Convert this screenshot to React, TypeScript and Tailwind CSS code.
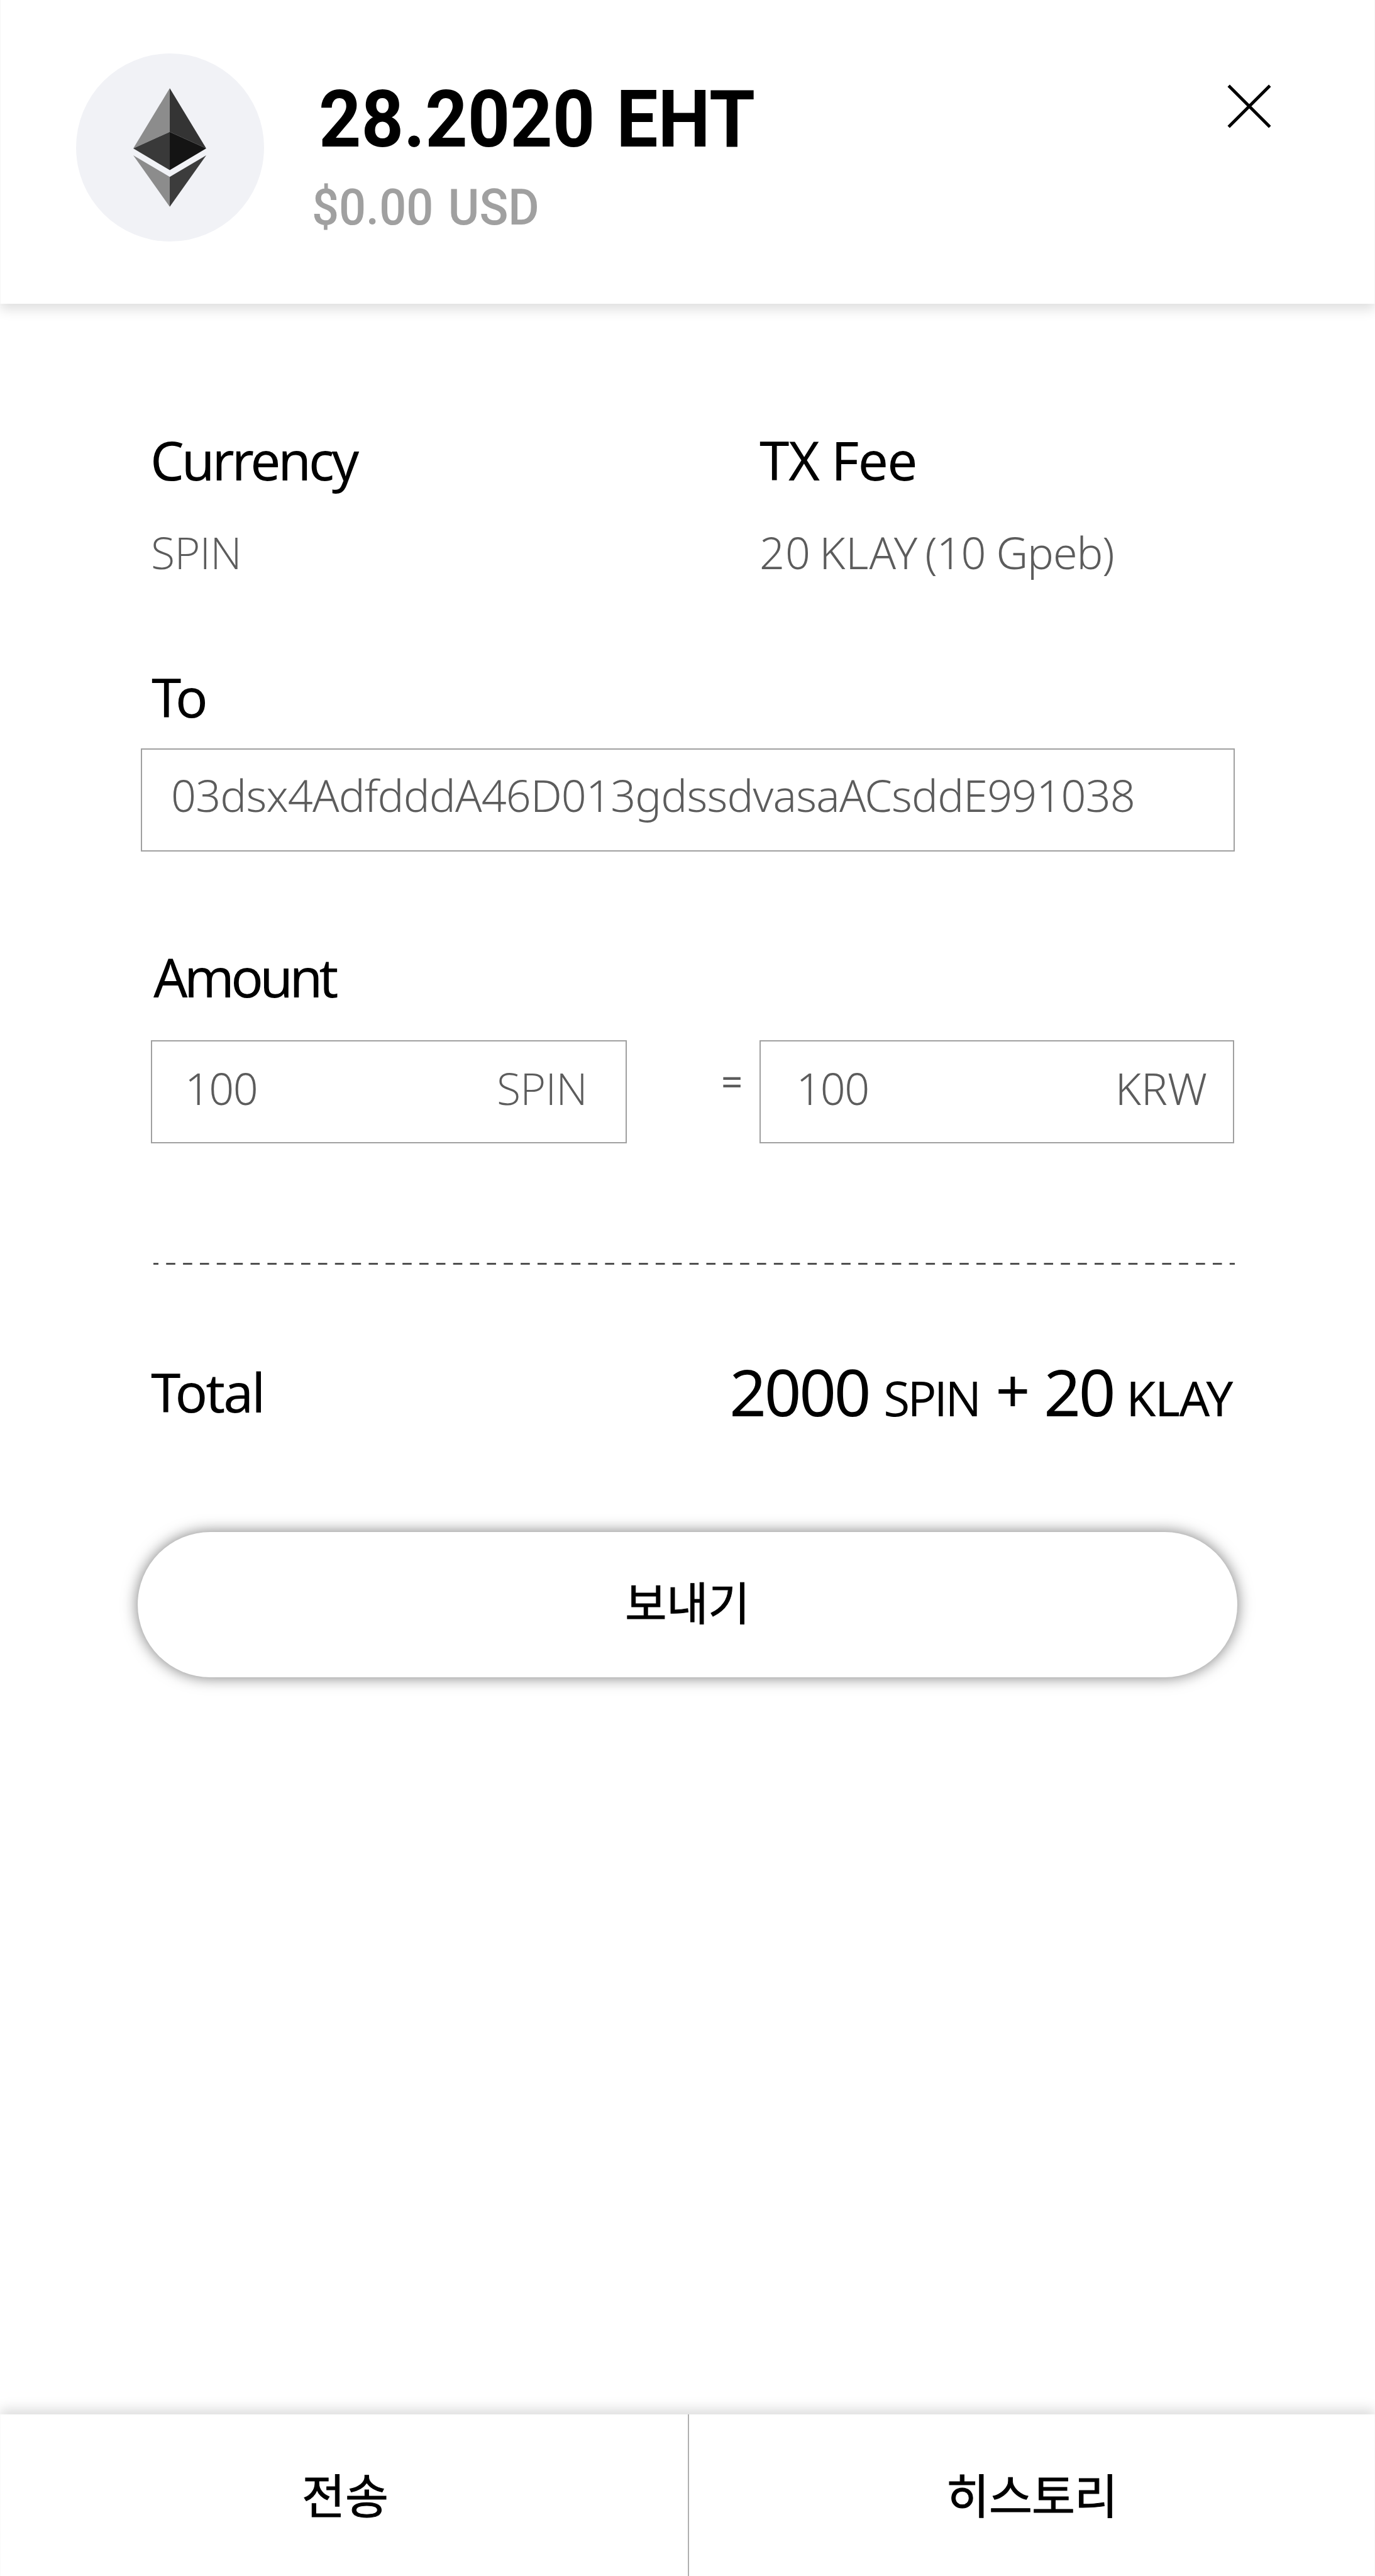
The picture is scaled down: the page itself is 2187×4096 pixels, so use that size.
import type { ReactNode } from "react";

function EthereumMark() {
  return (
    <svg className="h-[189px] w-[116px]" viewBox="63 116 594 966" aria-hidden="true">
      <path fill="#8c8c8c" d="M360 116 63 607l297-135z" />
      <path fill="#343434" d="M360 116v356l297 135z" />
      <path fill="#393939" d="M360 472 63 607l297 176z" />
      <path fill="#141414" d="M360 472v311l297-176z" />
      <path fill="#8c8c8c" d="M63 663l297 175v244z" />
      <path fill="#3c3c3c" d="M657 663 360 838v244z" />
    </svg>
  );
}

function CloseIcon() {
  return (
    <svg className="size-[70px]" viewBox="0 0 70 70" fill="none" stroke="#000" strokeWidth="4.9" aria-hidden="true">
      <path d="M2.2 2.2 67.8 67.8M67.8 2.2 2.2 67.8" />
    </svg>
  );
}

function Label({ className, children }: { className: string; children: ReactNode }) {
  return <span className={`text-[85.4px] leading-[100px] text-black ${className}`}>{children}</span>;
}

function Header() {
  return (
    <header className="relative z-10 flex h-[483px] items-start border-x border-[#f7f7f7] bg-white pl-[119.5px] pr-[164px] shadow-[0_9px_18px_rgba(0,0,0,0.13)]">
      <div className="mt-[85px] flex size-[299px] items-center justify-center rounded-full bg-[#f1f2f6]">
        <EthereumMark />
      </div>
      <div className="ml-[76px] mt-[121px] flex flex-col font-['Roboto',sans-serif]">
        <h1 className="ml-[11px] origin-left scale-x-[0.938] text-[125.5px] font-bold leading-[140px] text-black [word-spacing:5px]">28.2020 EHT</h1>
        <p className="mt-[19px] origin-left scale-x-[0.947] text-[80px] font-medium leading-[100px] text-[#a0a0a0] [word-spacing:5px]">$0.00 USD</p>
      </div>
      <button type="button" aria-label="Close" className="ml-auto mt-[134px]">
        <CloseIcon />
      </button>
    </header>
  );
}

function Details() {
  return (
    <section className="pl-[239px] pt-[198px]">
      <div className="grid grid-cols-[969px_auto]">
        <Label className="tracking-[-4.1px]">Currency</Label>
        <Label className="tracking-[-1.6px] [word-spacing:-1px]">TX Fee</Label>
      </div>
      <div className="mt-[47px] grid grid-cols-[969px_auto] text-[70px] font-[330] leading-[100px] text-[#5c5c5c]">
        <span className="ml-px font-['Open_Sans',sans-serif] tracking-[-0.8px]">SPIN</span>
        <span>
          <span className="tracking-[1px] [word-spacing:-6px]">20 KLAY</span>
          <span className="ml-[11px] tracking-[-1.1px]">(10 Gpeb)</span>
        </span>
      </div>
    </section>
  );
}

function Recipient() {
  return (
    <section className="mt-[130px] flex flex-col pl-[224px] pr-[223px]">
      <Label className="ml-[17px] tracking-[-3.5px]">To</Label>
      <div className="mt-[32px] h-[164px] border-2 border-[#a0a0a0] pl-[46px] pt-[22px] text-[70px] font-[330] leading-[100px] tracking-[-0.83px] text-[#5c5c5c]">
        03dsx4AdfdddA46D013gdssdvasaACsddE991038
      </div>
    </section>
  );
}

function Amount() {
  return (
    <section className="mt-[149px] flex flex-col pl-[240px] pr-[224px]">
      <Label className="ml-[4px] tracking-[-5.6px]">Amount</Label>
      <div className="mt-[51px] flex text-[70px] font-[330] leading-[100px] text-[#5c5c5c]">
        <div className="flex h-[164px] w-[757px] justify-between border-2 border-[#a0a0a0] pl-[52px] pr-[61px] pt-[24px]">
          <span className="tracking-[-1.6px]">100</span>
          <span className="font-['Open_Sans',sans-serif] tracking-[-0.8px]">SPIN</span>
        </div>
        <span className="ml-[150px] mt-[15px] text-[60px] font-normal">=</span>
        <div className="ml-auto flex h-[164px] w-[755px] justify-between border-2 border-[#a0a0a0] pl-[56.5px] pr-[41px] pt-[24px]">
          <span className="tracking-[-1.6px]">100</span>
          <span>KRW</span>
        </div>
      </div>
    </section>
  );
}

function Total() {
  return (
    <section className="mt-[190px] px-[223px]">
      <svg className="ml-[20.5px] block h-[3px] w-[1720px]" viewBox="0 0 1720 3" aria-hidden="true">
        <path d="M0 1.5h1720" stroke="#505050" strokeWidth="2.8" strokeDasharray="14.6 12.25" strokeDashoffset="6.6" />
      </svg>
      <div className="mt-[152px] flex h-[100px] pl-[17px] text-black">
        <Label className="tracking-[-2.9px]">Total</Label>
        <div className="-mt-px ml-auto mr-[4px] flex items-baseline text-[102.8px] leading-[100px]">
          <span className="tracking-[-3.3px]">2000</span>
          <span className="ml-[23px] font-['Open_Sans',sans-serif] text-[76.5px] tracking-[-3.7px]">SPIN</span>
          <span className="ml-[26px] -translate-y-[5px] text-[96px]">+</span>
          <span className="ml-[22px] tracking-[-3.3px]">20</span>
          <span className="ml-[20px] text-[76.5px] tracking-[-1.6px]">KLAY</span>
        </div>
      </div>
    </section>
  );
}

function TabBar() {
  return (
    <nav className="mt-auto grid h-[257px] grid-cols-[1095px_1090px] border-x border-[#fafafa] bg-white font-['Noto_Sans_CJK_KR',sans-serif] text-[75px] leading-[100px] text-black shadow-[0_-9px_18px_rgba(0,0,0,0.13)] [-webkit-text-stroke:1px_black]">
      <button type="button" className="flex justify-center border-r-2 border-[#b0b0b0] pl-[3px] pt-[76px]">
        전송
      </button>
      <button type="button" className="flex justify-center pt-[76px] tracking-[-0.9px]">
        히스토리
      </button>
    </nav>
  );
}

export default function App() {
  return (
    <main className="flex h-[4096px] w-[2187px] flex-col overflow-hidden whitespace-nowrap bg-white font-['Noto_Sans',sans-serif]">
      <Header />
      <Details />
      <Recipient />
      <Amount />
      <Total />
      <button
        type="button"
        className="ml-[219px] mt-[173px] flex h-[231px] w-[1749px] justify-center rounded-full bg-white pt-[59px] font-['Noto_Sans_CJK_KR',sans-serif] text-[72px] leading-[100px] text-black shadow-[0_0_25px_rgba(0,0,0,0.53)] [-webkit-text-stroke:1px_black]"
      >
        보내기
      </button>
      <TabBar />
    </main>
  );
}
